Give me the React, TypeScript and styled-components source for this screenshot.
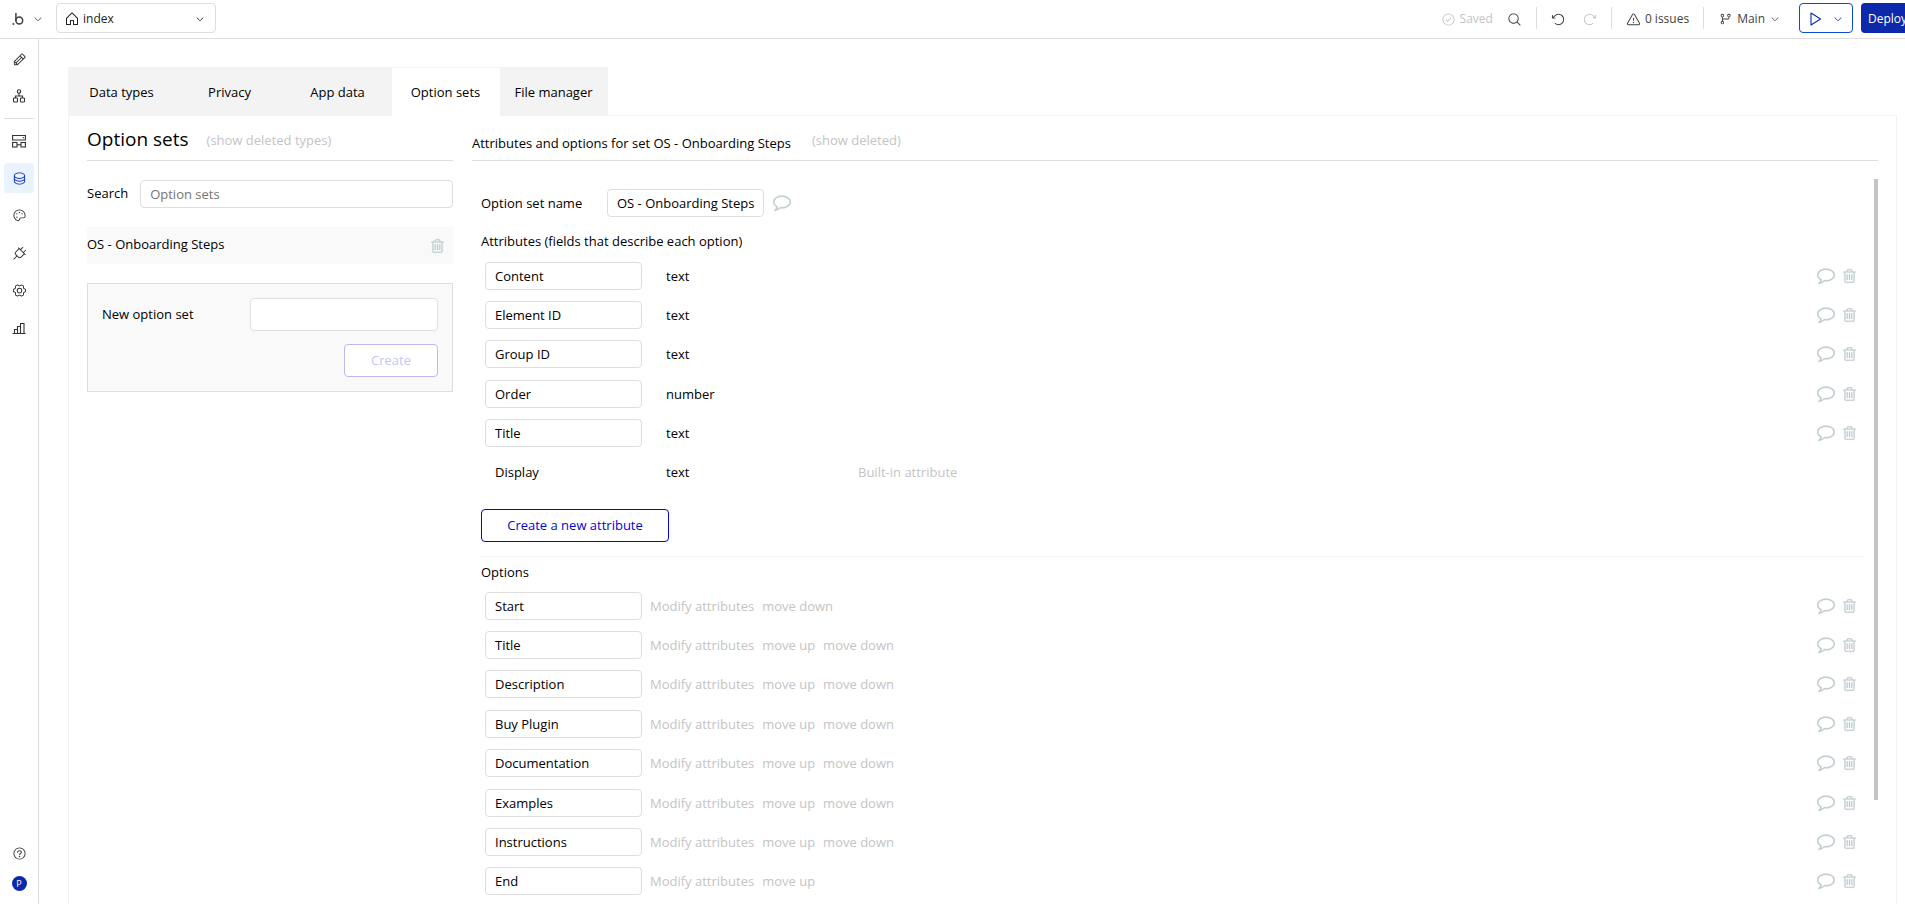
import React, { useState } from "react";
import styled, { createGlobalStyle } from "styled-components";
import {
  PiArrowClockwise,
  PiArrowCounterClockwise,
  PiCaretDown,
  PiCheckCircle,
  PiDatabase,
  PiGearSix,
  PiGitBranch,
  PiHouse,
  PiMagnifyingGlass,
  PiPalette,
  PiPencil,
  PiPlug,
  PiQuestion,
  PiWarning,
} from "react-icons/pi";

const colors = {
  text: "#000000",
  toolbarText: "#3f3f3f",
  muted: "#c4c4c4",
  line: "#dedede",
  soft: "#f3f3f3",
  icon: "#bfcbd0",
  brand: "#0c29ab",
  action: "#0205d3",
};

const GlobalStyle = createGlobalStyle`
  * { box-sizing: border-box; }
  body {
    margin: 0;
    background: #fff;
    color: ${colors.text};
    font: 13px/18px "Open Sans", sans-serif;
  }
  button, input, select { font: inherit; color: inherit; }
  ul { list-style: none; margin: 0; padding: 0; }
`;

const Page = styled.div`
  display: flex;
  flex-direction: column;
  height: 100vh;
  overflow: hidden;
`;

const Toolbar = styled.header`
  display: flex;
  align-items: center;
  justify-content: space-between;
  flex: none;
  height: 39px;
  padding: 3px 0 5px 12px;
  border-bottom: 1px solid ${colors.line};
  color: ${colors.toolbarText};
  font-size: 12px;
  font-weight: 500;
  overflow: hidden;
`;

const ToolGroup = styled.div<{ $gap?: number }>`
  display: flex;
  align-items: center;
  flex: none;
  gap: ${(p) => p.$gap ?? 0}px;
`;

const PlainButton = styled.button<{ $gap?: number; $muted?: boolean }>`
  display: flex;
  align-items: center;
  gap: ${(p) => p.$gap ?? 0}px;
  padding: 2px 0 0;
  border: 0;
  background: none;
  white-space: nowrap;
  cursor: pointer;
  color: ${(p) => (p.$muted ? colors.muted : "inherit")};
`;

const PagePicker = styled.label`
  display: flex;
  align-items: center;
  gap: 3px;
  width: 160px;
  height: 30px;
  margin-left: 13px;
  padding: 1px 10px 0 7px;
  border: 1px solid ${colors.line};
  border-radius: 4px;
  color: #222;
`;

const PageSelect = styled.select`
  flex: 1;
  min-width: 0;
  padding: 0;
  border: 0;
  appearance: none;
  background: none;
  font-size: 12px;
`;

const Divider = styled.span`
  width: 1px;
  height: 22px;
  background: ${colors.line};
`;

const Tools = styled(ToolGroup)`
  gap: 14px;
  margin-right: -16px;
`;

const LaunchGroup = styled(ToolGroup)`
  gap: 8px;
  margin-left: 5px;
`;

const PreviewButton = styled.button`
  display: flex;
  align-items: center;
  justify-content: space-between;
  width: 54px;
  height: 30px;
  padding: 2px 9px 0 8px;
  border: 1px solid #0b4bd6;
  border-radius: 4px;
  background: #fff;
  color: ${colors.brand};
`;

const DeployButton = styled.button`
  width: 60px;
  height: 30px;
  padding: 2px 7px 0;
  border: 0;
  border-radius: 4px;
  background: ${colors.brand};
  color: #fff;
  text-align: left;
`;

const Body = styled.div`
  display: flex;
  flex: 1;
  min-height: 0;
`;

const Sidebar = styled.nav`
  display: flex;
  flex-direction: column;
  align-items: center;
  gap: 7px;
  flex: none;
  width: 39px;
  padding: 5px 0 6px;
  border-right: 1px solid ${colors.line};
`;

const SideGroup = styled.div`
  display: flex;
  flex-direction: column;
  justify-content: space-between;
  height: 217px;
`;

const SideButton = styled.button<{ $active?: boolean }>`
  display: flex;
  align-items: center;
  justify-content: center;
  width: 30px;
  height: 30px;
  padding: 0;
  border: 0;
  border-radius: 4px;
  background: ${(p) => (p.$active ? "#e9f2ff" : "none")};
  color: ${(p) => (p.$active ? "#1a35b5" : "#333")};
`;

const SideRule = styled.span`
  width: 30px;
  height: 1px;
  background: ${colors.line};
`;

const SideFooter = styled.div`
  display: flex;
  flex-direction: column;
  align-items: center;
  margin-top: auto;
`;

const Avatar = styled.span`
  width: 15px;
  height: 15px;
  border-radius: 8px;
  background: ${colors.brand};
  color: #fff;
  font-size: 9px;
  line-height: 15px;
  text-align: center;
`;

const Main = styled.main`
  display: flex;
  flex-direction: column;
  flex: 1;
  min-width: 0;
  padding: 28px 8px 0 29px;
`;

const Tabs = styled.div`
  display: flex;
  flex: none;
`;

const Tab = styled.button<{ $active: boolean }>`
  width: 108px;
  height: 49px;
  padding: 0 1px 0 0;
  border: 0;
  border-top: 1px solid ${colors.soft};
  background: ${(p) => (p.$active ? "#fff" : colors.soft)};
  cursor: pointer;
`;

const Panel = styled.div`
  display: flex;
  gap: 19px;
  flex: 1;
  min-height: 0;
  padding: 0 18px;
  border: 1px solid ${colors.soft};
  border-width: 0 1px;
`;

const PanelEdge = styled.div`
  flex: 1;
  border-bottom: 1px solid ${colors.soft};
`;

const LeftColumn = styled.section`
  display: flex;
  flex-direction: column;
  flex: none;
  width: 366px;
`;

const RightColumn = styled.section`
  display: flex;
  flex-direction: column;
  flex: 1;
  min-width: 0;
`;

const ColumnHeader = styled.header<{ $gap: number }>`
  display: flex;
  align-items: center;
  gap: ${(p) => p.$gap}px;
  flex: none;
  height: 45px;
  margin-bottom: 18px;
  padding-top: 3px;
  border-bottom: 1px solid ${colors.line};
`;

const Title = styled.h1`
  margin: 0;
  padding-bottom: 2px;
  font-size: 19px;
  line-height: 28px;
  font-weight: 400;
`;

const Subtitle = styled.h2`
  margin: 0;
  padding-top: 6px;
  font-size: 13px;
  font-weight: 400;
`;

const MutedLink = styled.a`
  color: ${colors.muted};
  text-decoration: none;
  white-space: nowrap;
`;

const TextInput = styled.input<{ $width?: number; $height?: number }>`
  flex: ${(p) => (p.$width ? "none" : "1")};
  width: ${(p) => (p.$width ? `${p.$width}px` : "auto")};
  min-width: 0;
  height: ${(p) => p.$height ?? 28}px;
  padding: 0 4px 0 9px;
  border: 1px solid ${colors.line};
  border-radius: 4px;
  background: #fff;
  outline: 0;
  &::placeholder { color: #757575; }
`;

const SearchRow = styled.div`
  display: flex;
  align-items: center;
  gap: 12px;
  margin: 1px 0 19px;
`;

const FieldLabel = styled.label`
  padding-bottom: 2px;
`;

const SetRow = styled.div`
  display: flex;
  align-items: center;
  justify-content: space-between;
  height: 37px;
  margin-bottom: 19px;
  padding-right: 9px;
  background: #f9f9f9;
`;

const SetName = styled.span`
  padding-bottom: 3px;
`;

const NewSetForm = styled.form`
  display: flex;
  flex-direction: column;
  gap: 13px;
  padding: 14px;
  border: 1px solid ${colors.line};
  background: #f9f9f9;
`;

const FormLine = styled.div<{ $end?: boolean }>`
  display: flex;
  align-items: center;
  justify-content: ${(p) => (p.$end ? "flex-end" : "space-between")};
`;

const OutlineButton = styled.button<{ $width: number }>`
  width: ${(p) => p.$width}px;
  height: 33px;
  padding: 0 0 2px;
  border: 1px solid ${colors.action};
  border-radius: 4px;
  background: #fff;
  color: ${colors.action};
  &:disabled {
    border-color: #babaf0;
    color: #c5c5f3;
  }
`;

const ScrollArea = styled.div`
  display: flex;
  flex: 1;
  min-height: 0;
`;

const ScrollContent = styled.div`
  flex: 1;
  min-width: 0;
  padding: 10px 10px 0 9px;
  overflow: hidden;
`;

const ScrollThumb = styled.div`
  flex: none;
  width: 4px;
  height: calc(100% - 104px);
  background: #c4c4c4;
`;

const NameRow = styled.div`
  display: flex;
  align-items: center;
  margin-bottom: 15px;
`;

const NameLabel = styled.label`
  width: 126px;
`;

const SectionLabel = styled.h3`
  margin: 0;
  font-size: 13px;
  font-weight: 400;
`;

const RowList = styled.ul<{ $height: number }>`
  display: grid;
  grid-auto-rows: 1fr;
  min-height: ${(p) => p.$height}px;
  margin: 6px 0 17px;
`;

const OptionList = styled(RowList)`
  margin-top: 5px;
`;

const Row = styled.li`
  display: flex;
  align-items: center;
  padding: 0 8px 0 4px;
`;

const TypeName = styled.span`
  width: 192px;
  margin-left: 24px;
`;

const FixedName = styled.span`
  width: 157px;
  padding-left: 10px;
`;

const RowLinks = styled.div`
  display: flex;
  gap: 8px;
  margin-left: 8px;
`;

const RowActions = styled.div`
  display: flex;
  align-items: center;
  gap: 8px;
  margin-left: auto;
`;

const IconButton = styled.button`
  display: flex;
  padding: 0;
  border: 0;
  background: none;
  color: ${colors.icon};
  cursor: pointer;
`;

const CommentButton = styled(IconButton)`
  padding-bottom: 2px;
`;

const NameComment = styled(CommentButton)`
  margin-left: 9px;
`;

const Separator = styled.hr`
  margin: 14px 0 6px;
  border: 0;
  border-top: 1px solid ${colors.soft};
`;

const CommentIcon = () => (
  <svg width="18" height="18" viewBox="0 0 1792 1792" fill="currentColor" stroke="currentColor" strokeWidth="30" aria-hidden="true">
    <path d="M896 384q-204 0-381.500 69.500t-282 187.500-104.500 255q0 112 71.500 213.500t201.500 175.500l87 50-27 96q-24 91-70 172 152-63 275-171l43-38 57 6q69 8 130 8 204 0 381.500-69.500t282-187.500 104.500-255-104.500-255-282-187.500-381.500-69.500zm896 512q0 174-120 321.500t-326 233-450 85.500q-70 0-145-8-198 175-460 242-49 14-114 22h-5q-15 0-27-10.500t-16-27.500v-1q-3-4-.5-12t2-10 4.500-9.500l6-9 7-8.500 8-9q7-8 31-34.500t34.500-38 31-39.500 32.500-51 27-59 26-76q-157-89-247.500-220t-90.500-281q0-174 120-321.500t326-233 450-85.500 450 85.500 326 233 120 321.500z" />
  </svg>
);

const TrashIcon = () => (
  <svg width="13" height="16" viewBox="192 0 1408 1792" fill="currentColor" stroke="currentColor" strokeWidth="20" aria-hidden="true">
    <path d="M704 736v576q0 14-9 23t-23 9h-64q-14 0-23-9t-9-23v-576q0-14 9-23t23-9h64q14 0 23 9t9 23zm256 0v576q0 14-9 23t-23 9h-64q-14 0-23-9t-9-23v-576q0-14 9-23t23-9h64q14 0 23 9t9 23zm256 0v576q0 14-9 23t-23 9h-64q-14 0-23-9t-9-23v-576q0-14 9-23t23-9h64q14 0 23 9t9 23zm128 724v-948h-896v948q0 22 7 40.500t14.500 27 10.500 8.500h832q3 0 10.500-8.500t14.500-27 7-40.500zm-672-1076h448l-48-117q-7-9-17-11h-317q-10 2-17 11zm928 32v64q0 14-9 23t-23 9h-96v948q0 83-47 143.500t-113 60.500h-832q-66 0-113-58.500t-47-141.500v-952h-96q-14 0-23-9t-9-23v-64q0-14 9-23t23-9h309l70-167q15-37 54-63t79-26h320q40 0 79 26t54 63l70 167h309q14 0 23 9t9 23z" />
  </svg>
);

const LogoIcon = () => (
  <svg width="12" height="14" viewBox="0 0 12 14" fill="none" stroke="currentColor" aria-hidden="true">
    <circle cx="7.300" cy="8.500" r="3.400" strokeWidth="1.500" />
    <path d="M3.900 1v8" strokeWidth="1.500" />
    <circle cx="1.400" cy="11.900" r="1" fill="currentColor" stroke="none" />
  </svg>
);

const LineIcon = ({ children }: { children: React.ReactNode }) => (
  <svg width="14" height="14" viewBox="0 0 14 14" fill="none" stroke="currentColor" strokeWidth="1.100" aria-hidden="true">
    {children}
  </svg>
);

const PlayIcon = () => (
  <LineIcon>
    <path d="M3 1v12L12.500 7z" strokeLinejoin="round" />
  </LineIcon>
);

const SitemapIcon = () => (
  <LineIcon>
    <circle cx="7" cy="2.500" r="1.700" />
    <path d="M7 4.200v2.800M3.500 9V7h7v2" />
    <rect x="1.500" y="9" width="4" height="4" rx=".8" />
    <rect x="8.500" y="9" width="4" height="4" rx=".8" />
  </LineIcon>
);

const ComponentsIcon = () => (
  <LineIcon>
    <path d="M.6 6V1.500h12.800V6H.6zM10.500 3.800h1.500" />
    <rect x=".6" y="8.500" width="4.400" height="4.500" />
    <rect x="9" y="8.500" width="4.400" height="4.500" />
    <path d="M5 10.800h4" />
  </LineIcon>
);

const BarsIcon = () => (
  <LineIcon>
    <path d="M.5 12.500h13M2.500 12.500v-4h3M5.500 12.500v-7h3M8.500 12.500v-10h3.500v10" />
  </LineIcon>
);

const tabNames = ["Data types", "Privacy", "App data", "Option sets", "File manager"];

const attributes = [
  { name: "Content", type: "text" },
  { name: "Element ID", type: "text" },
  { name: "Group ID", type: "text" },
  { name: "Order", type: "number" },
  { name: "Title", type: "text" },
];

const options = [
  "Start",
  "Title",
  "Description",
  "Buy Plugin",
  "Documentation",
  "Examples",
  "Instructions",
  "End",
];

interface SideItem {
  label: string;
  icon: React.ReactNode;
  active?: boolean;
}

const buildItems: SideItem[] = [
  { label: "Design", icon: <PiPencil size={15} /> },
  { label: "Workflow", icon: <SitemapIcon /> },
];

const appItems: SideItem[] = [
  { label: "Components", icon: <ComponentsIcon /> },
  { label: "Data", icon: <PiDatabase size={15} />, active: true },
  { label: "Styles", icon: <PiPalette size={15} /> },
  { label: "Plugins", icon: <PiPlug size={15} /> },
  { label: "Settings", icon: <PiGearSix size={15} /> },
  { label: "Logs", icon: <BarsIcon /> },
];

const SideItems = ({ items }: { items: SideItem[] }) => (
  <>
    {items.map((item) => (
      <SideButton key={item.label} $active={item.active} aria-label={item.label}>
        {item.icon}
      </SideButton>
    ))}
  </>
);

const Actions = ({ name }: { name: string }) => (
  <RowActions>
    <CommentButton aria-label={`Comment on ${name}`}>
      <CommentIcon />
    </CommentButton>
    <IconButton aria-label={`Delete ${name}`}>
      <TrashIcon />
    </IconButton>
  </RowActions>
);

const TopToolbar = () => (
  <Toolbar>
    <ToolGroup>
      <PlainButton $gap={9} aria-label="Main menu">
        <LogoIcon />
        <PiCaretDown size={10} />
      </PlainButton>
      <PagePicker>
        <PiHouse size={16} />
        <PageSelect aria-label="Page" defaultValue="index">
          <option>index</option>
        </PageSelect>
        <PiCaretDown size={10} />
      </PagePicker>
    </ToolGroup>
    <Tools>
      <PlainButton $gap={4} $muted>
        <PiCheckCircle size={15} />
        Saved
      </PlainButton>
      <PlainButton aria-label="Search">
        <PiMagnifyingGlass size={15} />
      </PlainButton>
      <Divider />
      <ToolGroup $gap={16}>
        <PlainButton aria-label="Undo">
          <PiArrowCounterClockwise size={15} />
        </PlainButton>
        <PlainButton $muted aria-label="Redo">
          <PiArrowClockwise size={15} />
        </PlainButton>
      </ToolGroup>
      <Divider />
      <PlainButton $gap={4}>
        <PiWarning size={15} />0 issues
      </PlainButton>
      <Divider />
      <PlainButton $gap={5}>
        <PiGitBranch size={14} />
        Main
        <PiCaretDown size={10} />
      </PlainButton>
      <LaunchGroup>
        <PreviewButton aria-label="Preview">
          <PlayIcon />
          <PiCaretDown size={10} />
        </PreviewButton>
        <DeployButton>Deploy</DeployButton>
      </LaunchGroup>
    </Tools>
  </Toolbar>
);

export default function App() {
  const [activeTab, setActiveTab] = useState("Option sets");

  return (
    <Page>
      <GlobalStyle />
      <TopToolbar />
      <Body>
        <Sidebar>
          <SideItems items={buildItems} />
          <SideRule />
          <SideGroup>
            <SideItems items={appItems} />
          </SideGroup>
          <SideFooter>
            <SideButton aria-label="Help">
              <PiQuestion size={15} />
            </SideButton>
            <SideButton aria-label="Account">
              <Avatar>P</Avatar>
            </SideButton>
          </SideFooter>
        </Sidebar>
        <Main>
          <Tabs>
            {tabNames.map((name) => (
              <Tab key={name} $active={name === activeTab} onClick={() => setActiveTab(name)}>
                {name}
              </Tab>
            ))}
            <PanelEdge />
          </Tabs>
          <Panel>
            <LeftColumn>
              <ColumnHeader $gap={18}>
                <Title>Option sets</Title>
                <MutedLink href="#deleted-types">(show deleted types)</MutedLink>
              </ColumnHeader>
              <SearchRow>
                <FieldLabel htmlFor="search">Search</FieldLabel>
                <TextInput id="search" placeholder="Option sets" />
              </SearchRow>
              <SetRow>
                <SetName>OS - Onboarding Steps</SetName>
                <IconButton aria-label="Delete OS - Onboarding Steps">
                  <TrashIcon />
                </IconButton>
              </SetRow>
              <NewSetForm>
                <FormLine>
                  <FieldLabel htmlFor="new-set">New option set</FieldLabel>
                  <TextInput id="new-set" $width={188} $height={33} />
                </FormLine>
                <FormLine $end>
                  <OutlineButton type="submit" disabled $width={94}>
                    Create
                  </OutlineButton>
                </FormLine>
              </NewSetForm>
            </LeftColumn>
            <RightColumn>
              <ColumnHeader $gap={21}>
                <Subtitle>Attributes and options for set OS - Onboarding Steps</Subtitle>
                <MutedLink href="#deleted">(show deleted)</MutedLink>
              </ColumnHeader>
              <ScrollArea>
                <ScrollContent>
                  <NameRow>
                    <NameLabel htmlFor="set-name">Option set name</NameLabel>
                    <TextInput id="set-name" $width={157} defaultValue="OS - Onboarding Steps" />
                    <NameComment aria-label="Comment on option set">
                      <CommentIcon />
                    </NameComment>
                  </NameRow>
                  <SectionLabel>Attributes (fields that describe each option)</SectionLabel>
                  <RowList $height={236}>
                    {attributes.map(({ name, type }) => (
                      <Row key={name}>
                        <TextInput $width={157} defaultValue={name} aria-label="Attribute name" />
                        <TypeName>{type}</TypeName>
                        <Actions name={name} />
                      </Row>
                    ))}
                    <Row>
                      <FixedName>Display</FixedName>
                      <TypeName>text</TypeName>
                      <MutedLink as="span">Built-in attribute</MutedLink>
                    </Row>
                  </RowList>
                  <OutlineButton $width={188}>Create a new attribute</OutlineButton>
                  <Separator />
                  <SectionLabel>Options</SectionLabel>
                  <OptionList $height={315}>
                    {options.map((name, i) => (
                      <Row key={name}>
                        <TextInput $width={157} defaultValue={name} aria-label="Option name" />
                        <RowLinks>
                          <MutedLink href="#modify">Modify attributes</MutedLink>
                          {i > 0 && <MutedLink href="#up">move up</MutedLink>}
                          {i < options.length - 1 && <MutedLink href="#down">move down</MutedLink>}
                        </RowLinks>
                        <Actions name={name} />
                      </Row>
                    ))}
                  </OptionList>
                </ScrollContent>
                <ScrollThumb />
              </ScrollArea>
            </RightColumn>
          </Panel>
        </Main>
      </Body>
    </Page>
  );
}
